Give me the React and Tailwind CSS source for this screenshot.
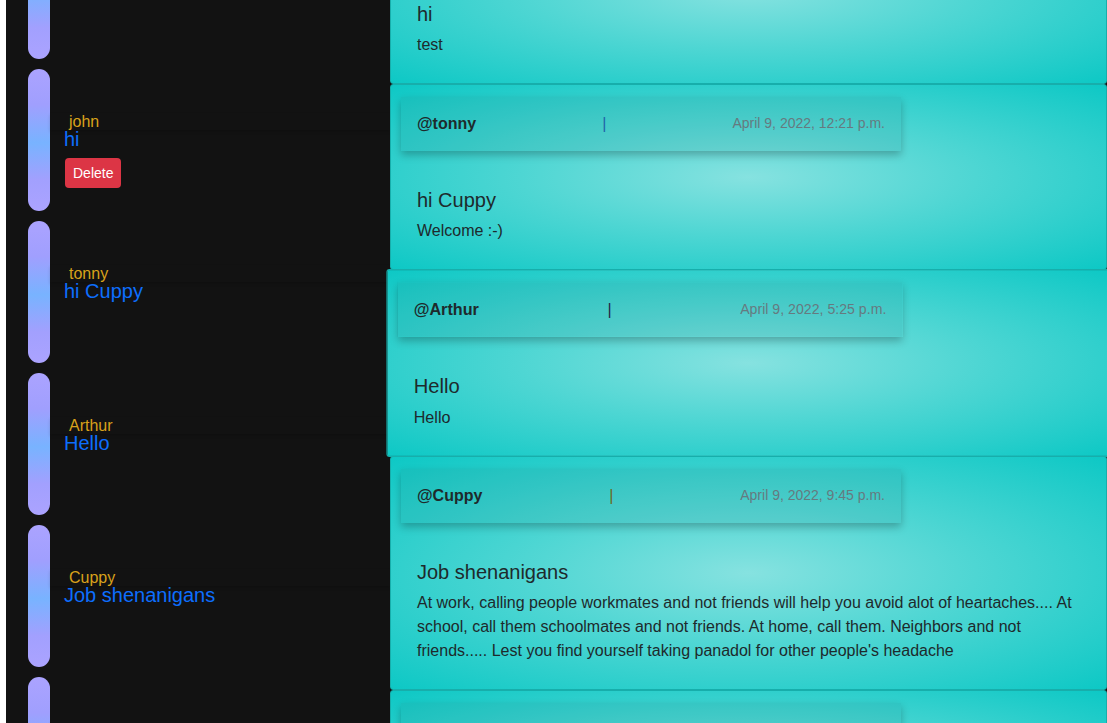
import React from 'react';

const feed = [
  { id: 1, title: 'hi', name: 'Cuppy' },
  { id: 2, title: 'hi', name: 'john', canDelete: true },
  { id: 3, title: 'hi Cuppy', name: 'tonny' },
  { id: 4, title: 'Hello', name: 'Arthur' },
  { id: 5, title: 'Job shenanigans', name: 'Cuppy' },
  { id: 6, title: 'Weekend', name: 'john' },
];

const posts = [
  { id: 1, author: 'john', date: 'April 9, 2022, 12:10 p.m.', pipe: 'text-[#2a3a5a]', title: 'hi', body: 'test' },
  { id: 2, author: 'tonny', date: 'April 9, 2022, 12:21 p.m.', pipe: 'text-[#2163a8]', title: 'hi Cuppy', body: 'Welcome :-)' },
  { id: 3, author: 'Arthur', date: 'April 9, 2022, 5:25 p.m.', pipe: 'text-[#262646]', title: 'Hello', body: 'Hello', hover: true },
  {
    id: 4,
    author: 'Cuppy',
    date: 'April 9, 2022, 9:45 p.m.',
    pipe: 'text-[#6a6a1c]',
    title: 'Job shenanigans',
    body: "At work, calling people workmates and not friends will help you avoid alot of heartaches.... At school, call them schoolmates and not friends. At home, call them. Neighbors and not friends..... Lest you find yourself taking panadol for other people's headache",
  },
  { id: 5, author: 'john', date: 'April 10, 2022, 8:02 a.m.', pipe: 'text-[#2163a8]', title: 'Weekend', body: 'Anyone up for football?' },
];

const SideItem = ({ item }) => (
  <div className="flex h-[142px] mb-[10px]">
    <div className="ml-[22px] w-[22px] h-full shrink-0 rounded-full bg-[linear-gradient(180deg,#aba3ff_0%,#a09ffe_25%,#78b3ff_52%,#a2a0fe_78%,#aba3ff_100%)]" />
    <div className="flex-1 pt-[44px]">
      <div className="pl-[19px] text-[16px] leading-[17px] text-[#d9a21b] shadow-[0_2px_3px_rgba(0,0,0,0.15)]">
        {item.name}
      </div>
      <div className="pl-[14px] text-[20px] leading-[19px] text-[#0d6efd]">{item.title}</div>
      {item.canDelete && (
        <button className="ml-[15px] mt-[9px] h-[30px] px-[8px] rounded-[4px] bg-[#dc3545] text-white text-[14px]">
          Delete
        </button>
      )}
    </div>
  </div>
);

const PostCard = ({ post }) => (
  <div
    className={`border border-[#17aeab] rounded-[3px] bg-[radial-gradient(ellipse_at_center,#86e2e0_0%,#4ed6d3_45%,#0dc8c5_100%)] pt-[12px] pb-[26px] px-[10px] ${
      post.hover ? 'scale-[1.01] relative z-10' : ''
    }`}
  >
    <div className="w-[500px] h-[54px] px-4 flex items-center justify-between bg-[rgba(30,120,120,0.12)] shadow-[0_4px_8px_rgba(0,0,0,0.25)]">
      <span className="font-bold text-base text-[#1e2a2c]">@{post.author}</span>
      <span className={`text-base ${post.pipe}`}>|</span>
      <span className="text-[14px] text-[#667a80] -mt-[2px]">{post.date}</span>
    </div>
    <div className="px-4 mt-[37px]">
      <h3 className="text-[20px] leading-6 text-[#1e2a2c]">{post.title}</h3>
      <p className="mt-[7px] text-base leading-6 text-[#1e2a2c]">{post.body}</p>
    </div>
  </div>
);

export default function App() {
  return (
    <div className="h-[723px] overflow-hidden flex bg-white pl-[6px] font-['Liberation_Sans',Arial,sans-serif]">
      {/* Sidebar */}
      <div className="w-[384px] shrink-0 bg-[#121212]">
        <div className="-mt-[83px]">
          {feed.map((item) => (
            <SideItem key={item.id} item={item} />
          ))}
        </div>
      </div>

      {/* Posts */}
      <div className="w-[717px] shrink-0 bg-[#121212]">
        <div className="-mt-[102px]">
          {posts.map((post) => (
            <PostCard key={post.id} post={post} />
          ))}
        </div>
      </div>
    </div>
  );
}
